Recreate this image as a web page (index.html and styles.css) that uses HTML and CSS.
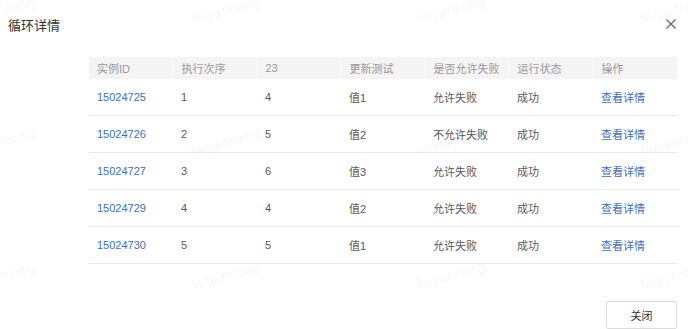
FILE: index.html
```html
<!DOCTYPE html>
<html lang="zh">
<head>
<meta charset="utf-8">
<link rel="stylesheet" href="styles.css">
</head>
<body>
<div class="dialog">
  <div class="dialog-header">
    <span class="dialog-title">循环详情</span>
    <span class="dialog-close">
      <svg width="12" height="12" viewBox="0 0 12 12"><path d="M1.5 1.5 L10.5 10.5 M10.5 1.5 L1.5 10.5" stroke="#666" stroke-width="1.3" fill="none"/></svg>
    </span>
  </div>
  <div class="dialog-body">
    <table class="grid">
      <thead>
        <tr><th>实例ID</th><th>执行次序</th><th>23</th><th>更新测试</th><th>是否允许失败</th><th>运行状态</th><th>操作</th></tr>
      </thead>
      <tbody>
        <tr><td><a class="link">15024725</a></td><td>1</td><td>4</td><td>值1</td><td>允许失败</td><td>成功</td><td><a class="link">查看详情</a></td></tr>
        <tr><td><a class="link">15024726</a></td><td>2</td><td>5</td><td>值2</td><td>不允许失败</td><td>成功</td><td><a class="link">查看详情</a></td></tr>
        <tr><td><a class="link">15024727</a></td><td>3</td><td>6</td><td>值3</td><td>允许失败</td><td>成功</td><td><a class="link">查看详情</a></td></tr>
        <tr><td><a class="link">15024729</a></td><td>4</td><td>4</td><td>值2</td><td>允许失败</td><td>成功</td><td><a class="link">查看详情</a></td></tr>
        <tr><td><a class="link">15024730</a></td><td>5</td><td>5</td><td>值1</td><td>允许失败</td><td>成功</td><td><a class="link">查看详情</a></td></tr>
      </tbody>
    </table>
  </div>
  <div class="dialog-footer">
    <button class="btn">关闭</button>
  </div>
</div>
<div class="watermark">
  <span class="wm r1 c0">liuyanrong</span><span class="wm r1 c1">liuyanrong</span><span class="wm r1 c2">liuyanrong</span><span class="wm r1 c3">liuyanrong</span>
  <span class="wm r2 c0">liuyanrong</span><span class="wm r2 c1">liuyanrong</span><span class="wm r2 c2">liuyanrong</span><span class="wm r2 c3">liuyanrong</span>
  <span class="wm r3 c0">liuyanrong</span><span class="wm r3 c1">liuyanrong</span><span class="wm r3 c2">liuyanrong</span><span class="wm r3 c3">liuyanrong</span>
</div>
</body>
</html>
```
FILE: styles.css
```css
html, body {
  margin: 0;
  padding: 0;
  background: #fff;
}
body {
  width: 688px;
  height: 329px;
  overflow: hidden;
  position: relative;
  font-family: "Liberation Sans", "Noto Sans CJK SC", sans-serif;
  font-size: 11px;
  color: #555;
}
.dialog {
  display: flex;
  flex-direction: column;
}
.dialog-header {
  height: 48px;
  display: flex;
  align-items: center;
  justify-content: space-between;
  padding: 0 11px 0 8px;
}
.dialog-title {
  font-size: 13px;
  color: #333;
  font-family: "Noto Sans CJK SC", sans-serif;
}
.dialog-close {
  display: flex;
  width: 12px;
  height: 12px;
}
.dialog-body {
  padding: 9px 11px 0 89px;
}
.grid {
  width: 588px;
  border-collapse: collapse;
  table-layout: fixed;
}
.grid th {
  height: 22px;
  padding: 0 8px;
  background: #f4f4f4;
  color: #999;
  font-weight: normal;
  text-align: left;
  border-right: 1px solid #fafafa;
}
.grid th:last-child {
  border-right: none;
}
.grid td {
  height: 36px;
  padding: 0 8px;
  border-bottom: 1px solid #e9e9e9;
  text-align: left;
  color: #585858;
}
.link {
  color: #3b6fc6;
  text-decoration: none;
}
.dialog-footer {
  display: flex;
  justify-content: flex-end;
  padding: 37px 11px 0 0;
}
.btn {
  width: 71px;
  height: 28px;
  background: #fff;
  border: 1px solid #dcdcdc;
  border-radius: 2px;
  font-family: "Noto Sans CJK SC", sans-serif;
  font-size: 11px;
  color: #333;
  padding: 0;
}
.watermark {
  position: absolute;
  inset: 0;
  pointer-events: none;
}
.wm {
  position: absolute;
  font-family: "Noto Sans", sans-serif;
  font-size: 14px;
  line-height: 14px;
  color: rgba(0, 0, 0, 0.055);
  transform: rotate(-14deg);
  transform-origin: 0 100%;
  white-space: nowrap;
}
.r1 { top: 11px; }
.r2 { top: 143px; }
.r3 { top: 277px; }
.c0 { left: -32px; }
.c1 { left: 193px; }
.c2 { left: 418px; }
.c3 { left: 643px; }
```
